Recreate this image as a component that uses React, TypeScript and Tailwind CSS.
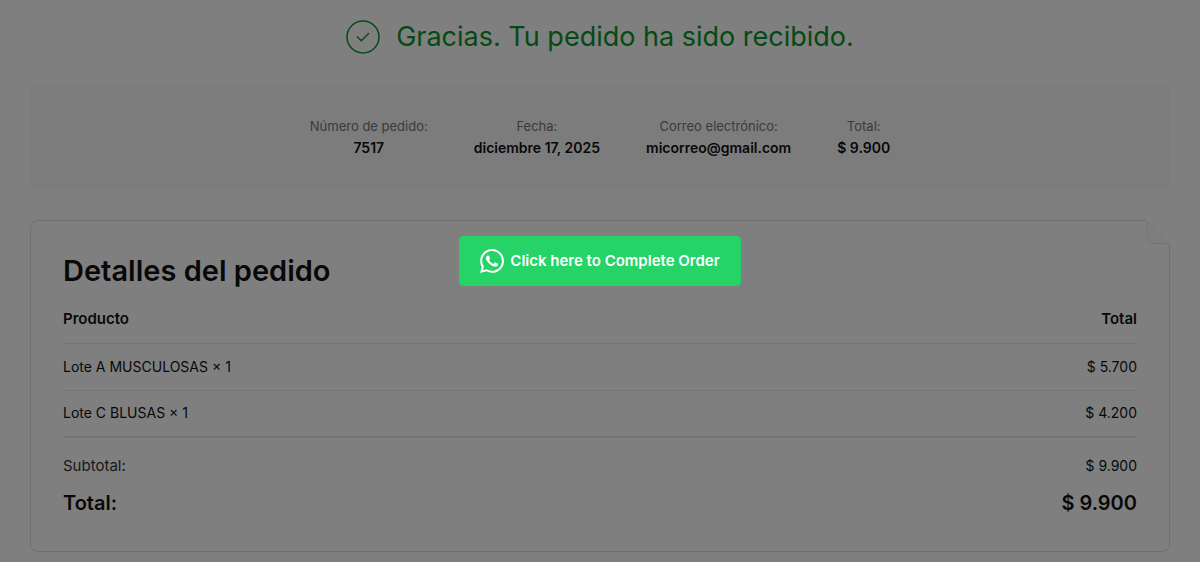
import React from "react";

interface OverviewItem {
  label: string;
  value: string;
}

interface OrderLine {
  name: string;
  quantity: number;
  total: string;
}

const overview: OverviewItem[] = [
  { label: "Número de pedido:", value: "7517" },
  { label: "Fecha:", value: "diciembre 17, 2025" },
  { label: "Correo electrónico:", value: "micorreo@gmail.com" },
  { label: "Total:", value: "$ 9.900" },
];

const lines: OrderLine[] = [
  { name: "Lote A MUSCULOSAS", quantity: 1, total: "$ 5.700" },
  { name: "Lote C BLUSAS", quantity: 1, total: "$ 4.200" },
];

const CheckIcon = () => (
  <svg viewBox="0 0 34 34" fill="none" stroke="currentColor" className="size-[34px] shrink-0" aria-hidden="true">
    <circle cx="17" cy="17" r="16" strokeWidth="1.5" />
    <path d="M11.300 16.800l4 4 7.300-7.400" strokeWidth="1.400" strokeLinecap="round" strokeLinejoin="round" />
  </svg>
);

const WhatsAppIcon = () => (
  <svg viewBox="0 0 24 24" fill="currentColor" className="size-6 shrink-0" aria-hidden="true">
    <path d="M17.472 14.382c-.297-.149-1.758-.867-2.030-.967-.273-.099-.471-.148-.67.150-.197.297-.767.966-.94 1.164-.173.199-.347.223-.644.075-.297-.150-1.255-.463-2.390-1.475-.883-.788-1.480-1.761-1.653-2.059-.173-.297-.018-.458.130-.606.134-.133.298-.347.446-.520.149-.174.198-.298.298-.497.099-.198.050-.371-.025-.520-.075-.149-.669-1.612-.916-2.207-.242-.579-.487-.5-.669-.510-.173-.008-.371-.010-.570-.010-.198 0-.520.074-.792.372-.272.297-1.040 1.016-1.040 2.479 0 1.462 1.065 2.875 1.213 3.074.149.198 2.096 3.200 5.077 4.487.709.306 1.262.489 1.694.625.712.227 1.360.195 1.871.118.571-.085 1.758-.719 2.006-1.413.248-.694.248-1.289.173-1.413-.074-.124-.272-.198-.570-.347m-5.421 7.403h-.004a9.870 9.870 0 01-5.031-1.378l-.361-.214-3.741.982.998-3.648-.235-.374a9.860 9.860 0 01-1.510-5.260c.001-5.450 4.436-9.884 9.888-9.884 2.640 0 5.122 1.030 6.988 2.898a9.825 9.825 0 012.893 6.994c-.003 5.450-4.437 9.884-9.885 9.884m8.413-18.297A11.815 11.815 0 0012.050 0C5.495 0 .160 5.335.157 11.892c0 2.096.547 4.142 1.588 5.945L.057 24l6.305-1.654a11.882 11.882 0 005.683 1.448h.005c6.554 0 11.890-5.335 11.893-11.893a11.821 11.821 0 00-3.480-8.413z" />
  </svg>
);

// Folded paper corner over the card border
const FoldedCorner = () => (
  <svg viewBox="0 0 24 24" className="absolute -top-px -right-px size-6" aria-hidden="true">
    <path d="M0 0H24V24z" fill="#fff" />
    <path d="M1.500 1.500V18q0 5.500 5.500 5.500H23.500z" fill="#fdfdfd" stroke="#ededed" />
  </svg>
);

const OrderTable = () => (
  <table className="mt-1.5 w-full text-sm">
    <thead>
      <tr className="h-12 border-b border-[#e9e9e9] text-[15px]">
        <th scope="col" className="text-left font-semibold">Producto</th>
        <th scope="col" className="text-right font-semibold">Total</th>
      </tr>
    </thead>
    <tbody className="border-b-2 border-[#e9e9e9]">
      {lines.map((line) => (
        <tr key={line.name} className="h-[47px] border-b border-[#e9e9e9] last:border-b-0">
          <td>
            {line.name} × {line.quantity}
          </td>
          <td className="text-right">{line.total}</td>
        </tr>
      ))}
    </tbody>
    <tfoot>
      <tr className="h-12">
        <th scope="row" className="pt-2 text-left text-[15px] font-normal text-[#333]">Subtotal:</th>
        <td className="pt-2 text-right">$ 9.900</td>
      </tr>
      <tr className="h-9 text-xl font-semibold">
        <th scope="row" className="text-left font-semibold">Total:</th>
        <td className="text-right">$ 9.900</td>
      </tr>
    </tfoot>
  </table>
);

export default function App() {
  return (
    <div className="min-h-screen bg-white font-['Inter',sans-serif] text-[#111]">
      <main className="px-[30px] pt-4 pb-2">
        <h1 className="flex items-center justify-center gap-4 text-[27px] leading-[42px] text-[#0a9428]">
          <CheckIcon />
          Gracias. Tu pedido ha sido recibido.
        </h1>

        <dl className="mt-7 flex flex-wrap justify-center gap-x-[46px] gap-y-4 bg-[#f8f8f8] px-4 py-[29px] text-center">
          {overview.map((item) => (
            <div key={item.label}>
              <dt className="text-[13px] leading-[22px] text-[#777]">{item.label}</dt>
              <dd className="text-sm leading-[22px] font-semibold">{item.value}</dd>
            </div>
          ))}
        </dl>

        <section className="relative mt-8 rounded-lg border border-[#dedede] px-8 pt-8 pb-[30px]">
          <FoldedCorner />
          <h2 className="text-[29px] leading-9 font-semibold">Detalles del pedido</h2>
          <OrderTable />
        </section>
      </main>

      <div className="fixed inset-0 flex items-center justify-center bg-black/50 pb-10">
        <a
          href="#whatsapp"
          className="flex h-[50px] items-center gap-1.5 rounded border border-[#25d366] bg-[#25d366] px-5 text-[15px] font-semibold text-white"
        >
          <WhatsAppIcon />
          Click here to Complete Order
        </a>
      </div>
    </div>
  );
}
